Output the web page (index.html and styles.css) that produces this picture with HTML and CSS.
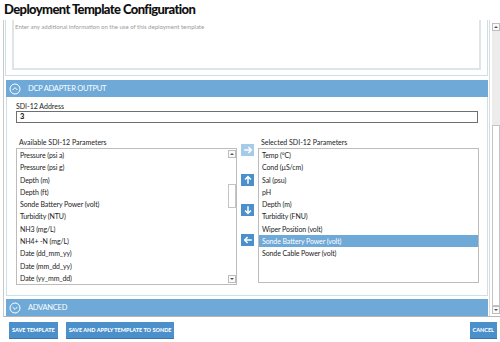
FILE: index.html
```html
<!DOCTYPE html>
<html lang="en">
<head>
  <meta charset="UTF-8" />
  <title>Deployment Template Configuration</title>
  <link rel="stylesheet" href="styles.css">
</head>
<body>
  <h1 class="page-title">Deployment Template Configuration</h1>

  <div class="content">
    <div class="scroll-pane">
      <div class="notes-panel">
        <div class="notes">Enter any additional information on the use of this deployment template</div>
      </div>

      <section class="group">
        <div class="group-head">
          <svg class="chev" viewBox="0 0 12 12" width="12" height="12">
            <circle cx="6" cy="6" r="5" fill="none" stroke="#fff" stroke-width="1"/>
            <polyline points="3.6,7 6,4.6 8.4,7" fill="none" stroke="#fff" stroke-width="1"/>
          </svg>
          DCP ADAPTER OUTPUT
        </div>
        <div class="group-body">
          <div class="field-label">SDI-12 Address</div>
          <div class="text-input">3</div>

          <div class="lists">
            <div class="list-col">
              <div class="list-label">Available SDI-12 Parameters</div>
              <div class="listbox">
                <ul class="items">
                  <li>Pressure (psi a)</li>
                  <li>Pressure (psi g)</li>
                  <li>Depth (m)</li>
                  <li>Depth (ft)</li>
                  <li>Sonde Battery Power (volt)</li>
                  <li>Turbidity (NTU)</li>
                  <li>NH3 (mg/L)</li>
                  <li>NH4+ -N (mg/L)</li>
                  <li>Date (dd_mm_yy)</li>
                  <li>Date (mm_dd_yy)</li>
                  <li>Date (yy_mm_dd)</li>
                </ul>
                <div class="mini-scroll">
                  <span class="sb-btn up"></span>
                  <span class="sb-track"><span class="sb-thumb"></span></span>
                  <span class="sb-btn down"></span>
                </div>
              </div>
            </div>

            <div class="move-btns">
              <button class="move disabled" title="Add">
                <svg viewBox="0 0 12 12" width="12" height="12"><path d="M1.5 6H10M6.5 2.5L10 6L6.5 9.5" fill="none" stroke="#fff" stroke-width="1.8"/></svg>
              </button>
              <button class="move" title="Up">
                <svg viewBox="0 0 12 12" width="12" height="12"><path d="M6 10.5V2M2.5 5.5L6 2L9.5 5.5" fill="none" stroke="#fff" stroke-width="1.8"/></svg>
              </button>
              <button class="move" title="Down">
                <svg viewBox="0 0 12 12" width="12" height="12"><path d="M6 1.5V10M2.5 6.5L6 10L9.5 6.5" fill="none" stroke="#fff" stroke-width="1.8"/></svg>
              </button>
              <button class="move" title="Remove">
                <svg viewBox="0 0 12 12" width="12" height="12"><path d="M10.5 6H2M5.5 2.5L2 6L5.5 9.5" fill="none" stroke="#fff" stroke-width="1.8"/></svg>
              </button>
            </div>

            <div class="list-col">
              <div class="list-label">Selected SDI-12 Parameters</div>
              <div class="listbox short">
                <ul class="items">
                  <li>Temp (°C)</li>
                  <li>Cond (µS/cm)</li>
                  <li>Sal (psu)</li>
                  <li>pH</li>
                  <li>Depth (m)</li>
                  <li>Turbidity (FNU)</li>
                  <li>Wiper Position (volt)</li>
                  <li class="selected">Sonde Battery Power (volt)</li>
                  <li>Sonde Cable Power (volt)</li>
                </ul>
              </div>
            </div>
          </div>
        </div>
      </section>

      <section class="group">
        <div class="group-head">
          <svg class="chev" viewBox="0 0 12 12" width="12" height="12">
            <circle cx="6" cy="6" r="5" fill="none" stroke="#fff" stroke-width="1"/>
            <polyline points="3.6,5 6,7.4 8.4,5" fill="none" stroke="#fff" stroke-width="1"/>
          </svg>
          ADVANCED
        </div>
      </section>
    </div>

    <div class="page-scroll">
      <span class="sb-btn up"></span>
      <span class="sb-track"><span class="sb-thumb"></span></span>
      <span class="sb-btn down"></span>
    </div>
  </div>

  <footer class="actions">
    <button class="btn">SAVE TEMPLATE</button>
    <button class="btn">SAVE AND APPLY TEMPLATE TO SONDE</button>
    <button class="btn cancel">CANCEL</button>
  </footer>
</body>
</html>
```

FILE: styles.css
```css
:root {
  --azul: #6ea9d7;
  --azul-botao: #4b8fcb;
  --borda-clara: #cbe1e9;
  --texto: #222;
}

* {
  margin: 0;
  padding: 0;
  box-sizing: border-box;
}

body {
  font-family: Lato, 'Open Sans', sans-serif;
  color: var(--texto);
  background: #fff;
  width: 500px;
  height: 342px;
  overflow: hidden;
}

.page-title {
  font-size: 13px;
  font-weight: 900;
  letter-spacing: -0.6px;
  height: 20px;
  line-height: 16px;
  padding: 1px 4px 0;
  color: #111;
}

.content {
  display: flex;
  height: 297px;
  margin-left: 3px;
  border-left: 1px solid #c9c9c9;
  border-bottom: 1px solid #b5b5b5;
}

.scroll-pane {
  flex: 1;
  overflow: hidden;
}

/* caixa de observacoes (rolada para cima) */
.notes-panel {
  margin: 0 1px 4px;
  padding: 0 6px 5px;
  border: 1px solid var(--borda-clara);
  border-top: none;
}

.notes {
  height: 50px;
  border: 2px solid #dfe4e7;
  border-top: none;
  padding: 3px 1px 0;
  font-size: 6px;
  color: #9a9a9a;
}

.group {
  margin: 0 1px 0 2px;
}

.group-head {
  display: flex;
  align-items: center;
  gap: 7px;
  height: 17px;
  padding-left: 3px;
  background: var(--azul);
  color: #fff;
  font-size: 7.5px;
  letter-spacing: -0.25px;
}

.chev {
  width: 12px;
  height: 12px;
  flex-shrink: 0;
}

.group-body {
  border: 1px solid var(--borda-clara);
  border-top: none;
  padding: 4px 9px 10px 9px;
  margin-bottom: 3px;
}

.field-label,
.list-label {
  font-size: 7px;
  line-height: 10px;
  color: #222;
}

.list-label {
  padding-left: 3px;
  margin-top: 14px;
  margin-bottom: 1px;
}

.text-input {
  height: 12px;
  border: 1px solid #6f6f6f;
  font-size: 7.5px;
  font-weight: 900;
  line-height: 10px;
  padding-left: 3px;
}

.lists {
  display: grid;
  grid-template-columns: 221px 13px 221px;
  column-gap: 4px;
}

.listbox {
  display: flex;
  height: 137px;
  border: 1px solid #bcbcbc;
}

.listbox.short {
  height: 135px;
}

.items {
  list-style: none;
  flex: 1;
}

.items li {
  font-size: 7px;
  line-height: 12.3px;
  height: 12.3px;
  padding-left: 3px;
  letter-spacing: -0.1px;
  white-space: nowrap;
}

.items li.selected {
  background: var(--azul);
  color: #fff;
}

/* barras de rolagem */
.mini-scroll,
.page-scroll {
  display: flex;
  flex-direction: column;
  width: 8px;
  padding: 1px 0;
}

.page-scroll {
  width: 11px;
  padding: 3px 0 2px 2px;
  border-left: 1px solid #dcdcdc;
}

.sb-btn {
  height: 8px;
  border: 1px solid #bdbdbd;
  background: #fafafa;
  position: relative;
}

.sb-btn::after {
  content: '';
  position: absolute;
  left: 50%;
  top: 50%;
  margin: -1px 0 0 -2px;
  border-left: 2px solid transparent;
  border-right: 2px solid transparent;
}

.sb-btn.up::after {
  border-bottom: 2px solid #555;
}

.sb-btn.down::after {
  border-top: 2px solid #555;
}

.sb-track {
  flex: 1;
  display: flex;
  flex-direction: column;
  background: #f3f3f3;
}

.mini-scroll .sb-track {
  padding-top: 26px;
  background: #fff;
}

.mini-scroll .sb-thumb {
  height: 24px;
  border: 1px solid #c4c4c4;
  background: #fff;
}

.page-scroll .sb-track {
  justify-content: flex-end;
  background: #ececec;
}

.page-scroll .sb-thumb {
  height: 181px;
  border: 1px solid #c4c4c4;
  background: #fff;
}

.move-btns {
  display: flex;
  flex-direction: column;
  gap: 18px;
  padding-top: 21px;
}

.move {
  width: 13px;
  height: 12px;
  border: none;
  background: var(--azul-botao);
  display: flex;
  align-items: center;
  justify-content: center;
  cursor: pointer;
}

.move svg {
  width: 10px;
  height: 10px;
}

.move.disabled {
  background: #a6cbe8;
}

/* rodape com acoes */
.actions {
  display: flex;
  gap: 8px;
  padding: 5px 3px 0 9px;
}

.btn {
  height: 17px;
  padding: 0 3px;
  border: none;
  border-bottom: 1px solid #3a76ad;
  background: var(--azul-botao);
  color: #fff;
  font-family: Lato, 'Open Sans', sans-serif;
  font-size: 5.5px;
  font-weight: 900;
  cursor: pointer;
}

.btn.cancel {
  margin-left: auto;
  padding: 0 3px;
}
```
